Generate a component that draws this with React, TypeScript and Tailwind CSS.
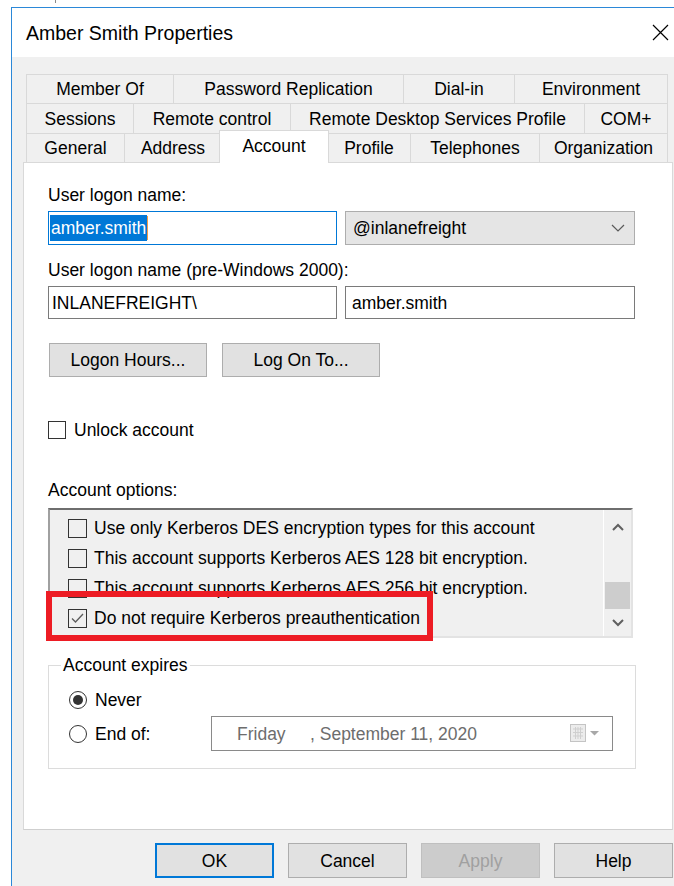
import React from "react";

type TabDef = { label: string; w: string; active?: boolean };

const tabRows: { h: string; tabs: TabDef[] }[] = [
  {
    h: "h-[29px]",
    tabs: [
      { label: "Member Of", w: "w-[147px]" },
      { label: "Password Replication", w: "w-[230px]" },
      { label: "Dial-in", w: "w-[111px]" },
      { label: "Environment", w: "w-[154px]" },
    ],
  },
  {
    h: "h-[30px]",
    tabs: [
      { label: "Sessions", w: "w-[107px]" },
      { label: "Remote control", w: "w-[157px]" },
      { label: "Remote Desktop Services Profile", w: "w-[294px]" },
      { label: "COM+", w: "w-[84px]" },
    ],
  },
  {
    h: "h-[29px]",
    tabs: [
      { label: "General", w: "w-[98px]" },
      { label: "Address", w: "w-[97px]" },
      { label: "Account", w: "w-[110px]", active: true },
      { label: "Profile", w: "w-[83px]" },
      { label: "Telephones", w: "w-[129px]" },
      { label: "Organization", w: "w-[129px]" },
    ],
  },
];

const accountOptions = [
  { label: "Use only Kerberos DES encryption types for this account", checked: false },
  { label: "This account supports Kerberos AES 128 bit encryption.", checked: false },
  { label: "This account supports Kerberos AES 256 bit encryption.", checked: false },
  { label: "Do not require Kerberos preauthentication", checked: true },
];

const CheckBox = ({ checked, size = "w-[19px] h-[19px]" }: { checked?: boolean; size?: string }) => (
  <div className={`${size} shrink-0 border border-[#333333] flex items-center justify-center`}>
    {checked && (
      <svg width="15" height="15" viewBox="0 0 15 15">
        <path d="M2 7.5 L5.5 11 L13 3" fill="none" stroke="#5c5c5c" strokeWidth="1.3" />
      </svg>
    )}
  </div>
);

const Radio = ({ checked }: { checked?: boolean }) => (
  <div className="w-[18px] h-[18px] shrink-0 rounded-full border border-[#333333] flex items-center justify-center">
    {checked && <div className="w-[10px] h-[10px] rounded-full bg-[#333333]" />}
  </div>
);

const DlgButton = ({ label, kind }: { label: string; kind?: "default" | "disabled" }) => {
  let cls = "border border-[#adadad] bg-[#e1e1e1] text-black";
  if (kind === "default") cls = "border-2 border-[#0078d7] bg-[#e1e1e1] text-black";
  if (kind === "disabled") cls = "border border-[#bfbfbf] bg-[#cccccc] text-[#a0a0a0]";
  return <div className={`w-[119px] h-[35px] flex items-center justify-center ${cls}`}>{label}</div>;
};

export default function App() {
  return (
    <div className="w-[674px] h-[886px] overflow-hidden bg-white font-['Liberation_Sans',Arial,sans-serif] text-[17.5px] leading-[20px] text-black">
      <div className="h-[7px]">
        <div className="ml-[55px] w-px h-[3px] bg-[#8a8a8a]" />
      </div>

      <div className="ml-[11px] w-[663px] border-l border-t border-[#2b88d8]">
        {/* caption */}
        <div className="h-[49px] bg-white flex items-center justify-between pl-[14px] pr-[5px]">
          <span className="text-[19.5px]">Amber Smith Properties</span>
          <svg width="17" height="17" viewBox="0 0 17 17">
            <path d="M1 1 L16 16 M16 1 L1 16" stroke="#000" strokeWidth="1.2" />
          </svg>
        </div>

        <div className="h-[829px] bg-[#f0f0f0] pt-[17px]">
          {/* tab strip */}
          <div className="ml-[14px]">
            {tabRows.map((row, ri) => (
              <div key={ri} className={`flex ${row.h}`}>
                {row.tabs.map((t, ti) =>
                  t.active ? (
                    <div
                      key={t.label}
                      className={`${t.w} relative z-10 -mx-[2px] -mt-[3px] h-[33px] bg-white border-x border-t border-[#d9d9d9] flex items-center justify-center pb-[3px]`}
                    >
                      {t.label}
                    </div>
                  ) : (
                    <div
                      key={t.label}
                      className={`${t.w} h-full border-l border-t border-[#d9d9d9] flex items-center justify-center ${
                        ti === row.tabs.length - 1 ? "border-r" : ""
                      }`}
                    >
                      {t.label}
                    </div>
                  )
                )}
              </div>
            ))}
          </div>

          {/* Account page */}
          <div className="ml-[11px] w-[650px] h-[668px] border border-[#d9d9d9] border-b-[#cfcfcf] bg-white pl-[24px] pt-[22px]">
            <div>User logon name:</div>
            <div className="mt-[6px] flex gap-[8px]">
              <div className="w-[289px] h-[34px] border border-[#0078d7] flex items-center pl-[1px]">
                <span className="bg-[#0078d7] text-white px-[1px] h-[26px] flex items-center">amber.smith</span>
                <span className="w-px h-[24px] bg-[#f29b45]" />
              </div>
              <div className="w-[290px] h-[34px] border border-[#adadad] bg-[#e5e5e5] flex items-center justify-between pl-[7px] pr-[9px]">
                <span>@inlanefreight</span>
                <svg width="14" height="8" viewBox="0 0 14 8">
                  <path d="M1 1 L7 7 L13 1" fill="none" stroke="#5a5a5a" strokeWidth="1.2" />
                </svg>
              </div>
            </div>

            <div className="mt-[15px]">User logon name (pre-Windows 2000):</div>
            <div className="mt-[6px] flex gap-[8px]">
              <div className="w-[289px] h-[33px] border border-[#7a7a7a] flex items-center pl-[3px]">INLANEFREIGHT\</div>
              <div className="w-[290px] h-[33px] border border-[#7a7a7a] flex items-center pl-[6px]">amber.smith</div>
            </div>

            <div className="mt-[24px] flex gap-[15px] pl-[1px]">
              <div className="w-[158px] h-[34px] border border-[#adadad] bg-[#e1e1e1] flex items-center justify-center">
                Logon Hours...
              </div>
              <div className="w-[158px] h-[34px] border border-[#adadad] bg-[#e1e1e1] flex items-center justify-center">
                Log On To...
              </div>
            </div>

            <div className="mt-[43px] flex items-center gap-[8px] h-[20px]">
              <CheckBox size="w-[18px] h-[18px]" />
              <span>Unlock account</span>
            </div>

            <div className="mt-[40px]">Account options:</div>

            <div className="relative mt-[8px] w-[585px]">
              <div className="h-[130px] border-2 border-t-[#6e6e6e] border-l-[#a0a0a0] border-r-[#e3e3e3] border-b-[#e3e3e3] bg-[#f0f0f0] flex overflow-hidden">
                <div className="flex-1 pl-[18px] pt-[3px]">
                  {accountOptions.map((o) => (
                    <div key={o.label} className="h-[30px] flex items-center gap-[7px]">
                      <CheckBox checked={o.checked} />
                      <span className="whitespace-nowrap">{o.label}</span>
                    </div>
                  ))}
                </div>
                <div className="w-[28px] border-l border-white flex flex-col items-center">
                  <div className="h-[33px] flex items-center justify-center">
                    <svg width="12" height="8" viewBox="0 0 12 8">
                      <path d="M1 7 L6 2 L11 7" fill="none" stroke="#606060" strokeWidth="2" />
                    </svg>
                  </div>
                  <div className="mt-[39px] w-[25px] h-[27px] bg-[#cdcdcd]" />
                  <div className="flex-1 flex items-center justify-center">
                    <svg width="12" height="8" viewBox="0 0 12 8">
                      <path d="M1 1 L6 6 L11 1" fill="none" stroke="#606060" strokeWidth="2" />
                    </svg>
                  </div>
                </div>
              </div>
              {/* highlight frame around the preauth option */}
              <div className="absolute left-[-2px] top-[83px] w-[387px] h-[50px] border-[6px] border-[#ed1c24]" />
            </div>

            <div className="mt-[27px] w-[588px] h-[104px] border border-[#dcdcdc]">
              <div className="-mt-[11px] ml-[12px] w-fit px-[2px] bg-white">Account expires</div>
              <div className="mt-[15px] pl-[20px] flex items-center gap-[8px] h-[20px]">
                <Radio checked />
                <span>Never</span>
              </div>
              <div className="mt-[6px] pl-[20px] flex items-center h-[35px]">
                <Radio />
                <span className="ml-[8px] w-[116px]">End of:</span>
                <div className="w-[402px] h-[35px] border border-[#8a8a8a] bg-white flex items-center justify-between pl-[25px] pr-[9px] text-[#6d6d6d]">
                  <div className="flex">
                    <span className="w-[73px]">Friday</span>
                    <span>, September 11, 2020</span>
                  </div>
                  <svg width="33" height="19" viewBox="0 0 33 19">
                    <rect x="0.5" y="0.5" width="15" height="17" fill="#ececec" stroke="#c4c4c4" />
                    <path
                      d="M3 5 H13 M3 8.5 H13 M3 12 H13 M5.5 3 V15 M8 3 V15 M10.5 3 V15"
                      stroke="#cfcfcf"
                      strokeWidth="1"
                    />
                    <path d="M20 7 L29 7 L24.5 11.5 Z" fill="#a8a8a8" />
                  </svg>
                </div>
              </div>
            </div>
          </div>

          {/* dialog buttons */}
          <div className="mt-[13px] ml-[143px] flex gap-[14px]">
            <DlgButton label="OK" kind="default" />
            <DlgButton label="Cancel" />
            <DlgButton label="Apply" kind="disabled" />
            <DlgButton label="Help" />
          </div>
        </div>
      </div>
    </div>
  );
}
